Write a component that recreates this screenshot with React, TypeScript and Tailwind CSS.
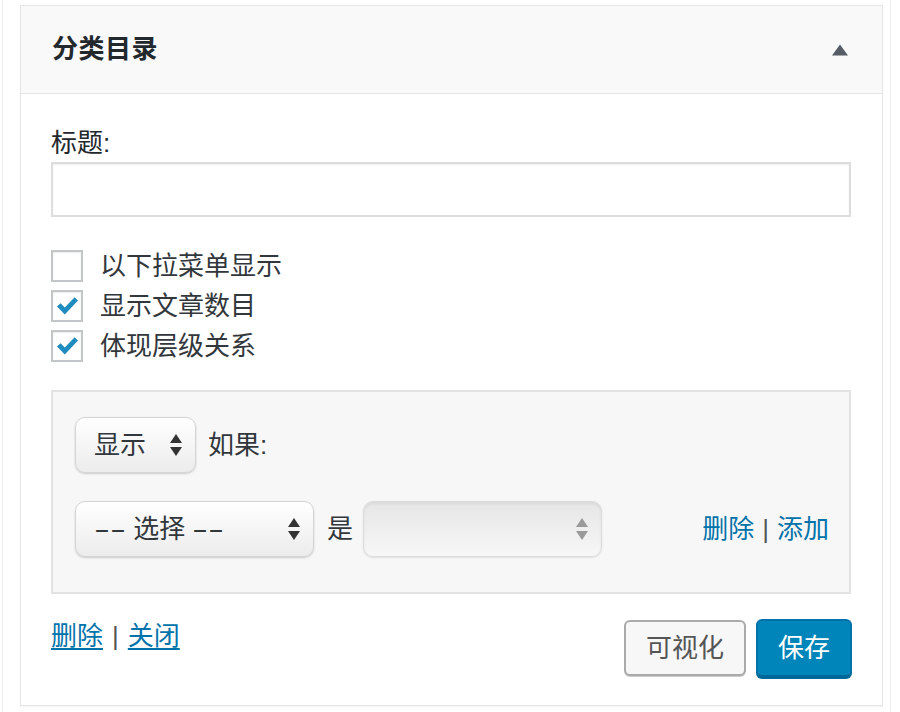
import React from 'react';

const font = { fontFamily: '"Liberation Sans", "Noto Sans CJK SC", sans-serif' };

const Check: React.FC = () => (
  <svg width="24" height="22" viewBox="0 0 24 22" className="block">
    <path d="M2 11.5 L5.5 8.2 L9.8 12.6 L19.6 2.2 L23 5.6 L9.8 19.6 Z" fill="#1e8cbe" />
  </svg>
);

const Arrows: React.FC<{ color: string }> = ({ color }) => (
  <svg width="14" height="26" viewBox="0 0 14 26" className="block">
    <polygon points="7,2 13,11 1,11" fill={color} />
    <polygon points="1,15 13,15 7,24" fill={color} />
  </svg>
);

const Checkbox: React.FC<{ checked: boolean; label: string }> = ({ checked, label }) => (
  <label className="flex items-center h-[40px]">
    <span className="w-[32px] h-[32px] border-2 border-[#c3c6c9] bg-white shadow-[inset_0_1px_2px_rgba(0,0,0,0.08)] flex items-center justify-center">
      {checked && <Check />}
    </span>
    <span className="ml-[17px] text-[26px] leading-[30px] text-[#32373c]">{label}</span>
  </label>
);

const Dashes: React.FC = () => (
  <span className="inline-block w-[32px] overflow-visible">
    <span className="inline-block scale-x-[1.85] origin-left">--</span>
  </span>
);

const Select: React.FC<{ width: string; children?: React.ReactNode; disabled?: boolean }> = ({ width, children, disabled }) => (
  <div
    className={`${width} h-[56px] rounded-[10px] border flex items-center justify-between pl-[18px] pr-[12px] ${
      disabled
        ? 'border-[#dcdcdc] bg-linear-to-b from-[#e6e6e6] to-[#f7f7f7] shadow-[inset_0_2px_3px_rgba(0,0,0,0.06),0_1px_2px_rgba(0,0,0,0.1)]'
        : 'border-[#d4d4d4] bg-linear-to-b from-white to-[#ececec] shadow-[0_1px_2px_rgba(0,0,0,0.18)]'
    }`}
  >
    <span className="text-[26px] leading-[30px] text-[#32373c] whitespace-pre">{children}</span>
    <Arrows color={disabled ? '#9a9a9a' : '#333'} />
  </div>
);

export default function App() {
  return (
    <div className="w-[900px] h-[712px] bg-white overflow-hidden" style={font}>
      <div className="ml-[2px] w-[889px] h-full border-x border-[#efefef] pl-[17px] pt-[5px]">
        <div className="w-[863px] h-[701px] border border-[#e5e5e5] shadow-[0_1px_1px_rgba(0,0,0,0.04)] bg-white">
          {/* Header */}
          <div className="h-[88px] bg-[#f9f9f9] border-b border-[#e5e5e5] flex items-center justify-between pl-[31px] pr-[33px]">
            <h3 className="text-[26px] font-bold text-[#23282d] tracking-[0.5px]">分类目录</h3>
            <svg width="18" height="12" viewBox="0 0 18 12" className="block">
              <polygon points="9,0.5 17,11.5 1,11.5" fill="#555d66" />
            </svg>
          </div>

          {/* Body */}
          <div className="px-[30px] pt-[34px]">
            <div className="text-[26px] leading-[30px] text-[#23282d]">标题:</div>
            <input
              type="text"
              className="mt-[4px] w-[800px] h-[55px] border-2 border-[#dddddd] bg-white shadow-[inset_0_1px_2px_rgba(0,0,0,0.07)] outline-none"
            />

            <div className="mt-[29px]">
              <Checkbox checked={false} label="以下拉菜单显示" />
              <Checkbox checked label="显示文章数目" />
              <Checkbox checked label="体现层级关系" />
            </div>

            {/* Conditions */}
            <div className="mt-[24px] w-[800px] h-[204px] border-2 border-[#e2e2e2] bg-[#f7f7f7] pl-[22px] pr-[20px] pt-[25px]">
              <div className="flex items-center">
                <Select width="w-[121px]">显示</Select>
                <span className="ml-[12px] text-[26px] leading-[30px] text-[#32373c]">如果:</span>
              </div>
              <div className="mt-[28px] flex items-center">
                <Select width="w-[239px]">
                  <Dashes /> 选择 <Dashes />
                </Select>
                <span className="ml-[13px] text-[26px] leading-[30px] text-[#32373c]">是</span>
                <div className="ml-[10px]">
                  <Select width="w-[239px]" disabled />
                </div>
                <div className="ml-auto text-[26px] leading-[30px] text-[#0073aa]">
                  <a>删除</a>
                  <span className="text-[#555] mx-[8px]">|</span>
                  <a>添加</a>
                </div>
              </div>
            </div>

            {/* Footer */}
            <div className="mt-[25px] flex items-start justify-between">
              <div className="pt-[2px] text-[26px] leading-[30px]">
                <a className="text-[#0073aa] underline underline-offset-[3px]">删除</a>
                <span className="text-[#555] mx-[9px]">|</span>
                <a className="text-[#0073aa] underline underline-offset-[3px]">关闭</a>
              </div>
              <div className="flex items-center gap-[10px]">
                <button className="w-[122px] h-[56px] rounded-[6px] border-2 border-[#aaaaaa] bg-[#f7f7f7] text-[26px] text-[#555] shadow-[0_1px_0_#ccc]">
                  可视化
                </button>
                <button className="w-[96px] h-[58px] rounded-[6px] border-2 border-[#0073aa] border-b-[#006799] bg-[#0085ba] text-[26px] text-white shadow-[0_2px_0_#006799]">
                  保存
                </button>
              </div>
            </div>
          </div>
        </div>
      </div>
    </div>
  );
}
